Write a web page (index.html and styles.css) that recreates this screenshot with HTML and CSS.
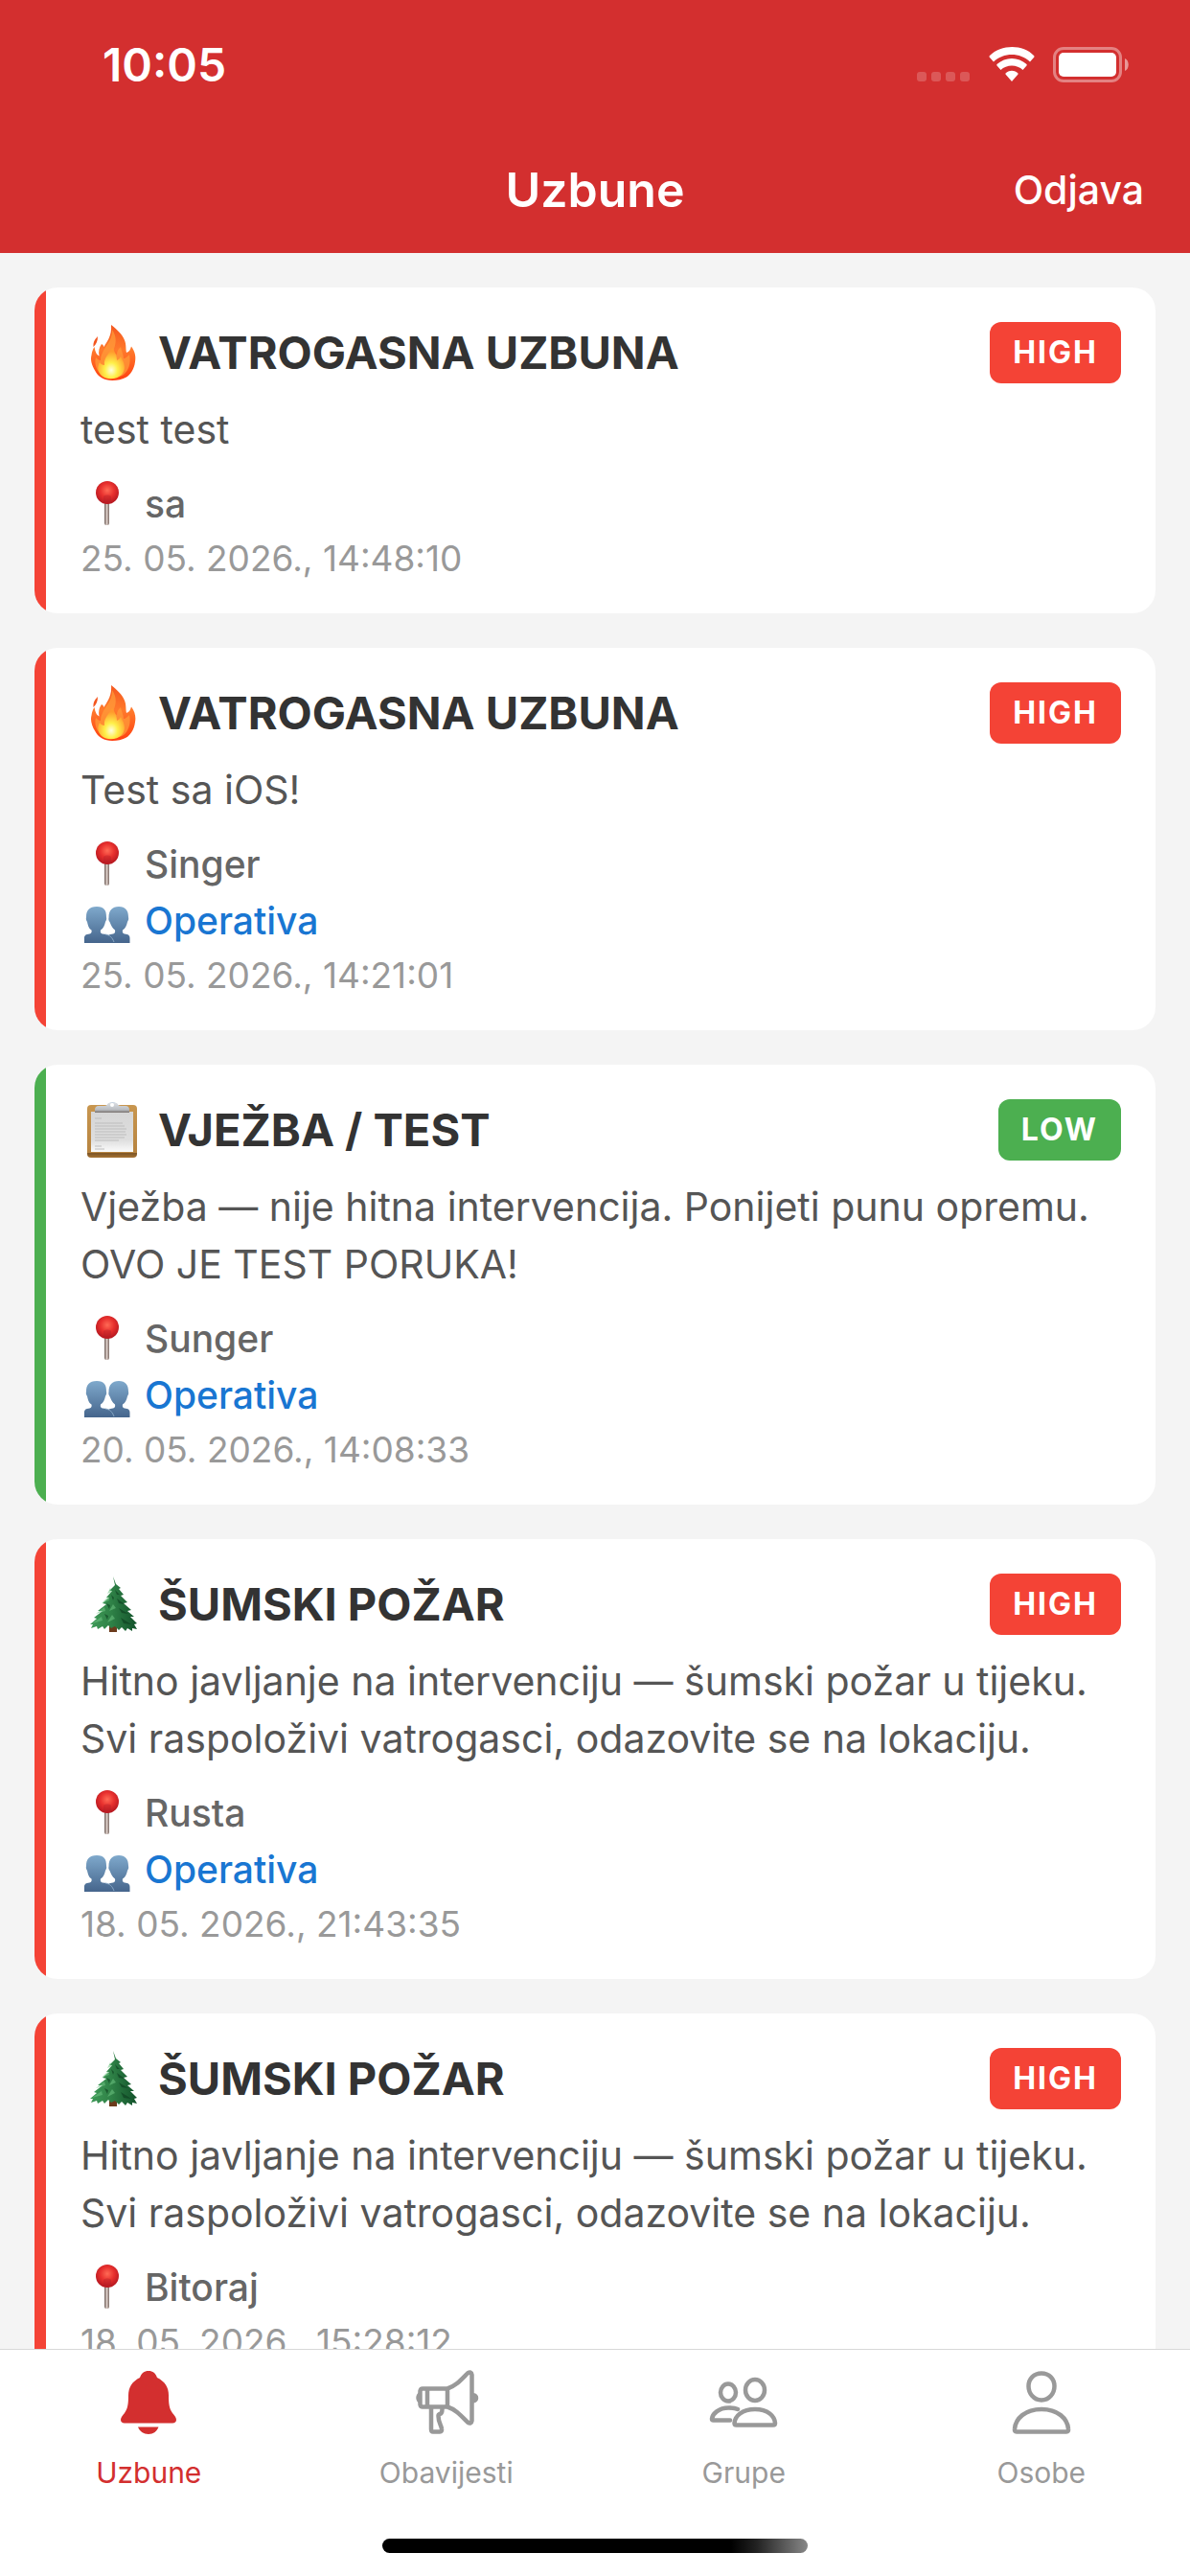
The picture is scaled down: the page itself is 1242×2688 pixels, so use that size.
FILE: index.html
```html
<!DOCTYPE html>
<html lang="hr">
<head>
<meta charset="utf-8">
<meta name="viewport" content="width=device-width, initial-scale=1">
<title>Uzbune</title>
<link rel="stylesheet" href="styles.css">
</head>
<body>
<svg class="sprite" aria-hidden="true">
  <defs>
    <linearGradient id="g-fire" x1="0" y1="0" x2="0" y2="1"><stop offset="0" stop-color="#f4571f"/><stop offset=".45" stop-color="#ff7a2c"/><stop offset="1" stop-color="#ff4010"/></linearGradient>
    <radialGradient id="g-core" cx=".5" cy=".72" r=".6"><stop offset="0" stop-color="#fffde0"/><stop offset=".4" stop-color="#fff04a"/><stop offset="1" stop-color="#ff9a2c"/></radialGradient>
    <radialGradient id="g-ball" cx=".5" cy=".4" r=".6"><stop offset="0" stop-color="#ff6a55"/><stop offset=".5" stop-color="#e8302e"/><stop offset="1" stop-color="#b3161f"/></radialGradient>
    <linearGradient id="g-stick"><stop offset="0" stop-color="#6d5d57"/><stop offset=".5" stop-color="#d9cbc5"/><stop offset="1" stop-color="#7b6a64"/></linearGradient>
    <linearGradient id="g-bust" x1="0" y1="0" x2="0" y2="1"><stop offset="0" stop-color="#7fa9cc"/><stop offset="1" stop-color="#45658c"/></linearGradient>
    <linearGradient id="g-board" x1="0" y1="0" x2="0" y2="1"><stop offset="0" stop-color="#c8964f"/><stop offset=".9" stop-color="#b78440"/><stop offset=".92" stop-color="#7c5424"/><stop offset="1" stop-color="#a87434"/></linearGradient>
    <linearGradient id="g-paper" x1="0" y1="0" x2="0" y2="1"><stop offset="0" stop-color="#d6d6d6"/><stop offset=".7" stop-color="#dedede"/><stop offset="1" stop-color="#fbfbfb"/></linearGradient>
    <linearGradient id="g-clip" x1="0" y1="0" x2="0" y2="1"><stop offset="0" stop-color="#d9dde2"/><stop offset=".7" stop-color="#b9bcc1"/><stop offset="1" stop-color="#77706c"/></linearGradient>
    <linearGradient id="g-tree"><stop offset="0" stop-color="#3f9a58"/><stop offset=".45" stop-color="#2f8247"/><stop offset="1" stop-color="#12512a"/></linearGradient>
  </defs>
  <symbol id="i-fire" viewBox="0 0 66 64">
    <path d="M18 15c-3 3-5 6-4.500 11 3-3 4.500-6 4.500-11z" fill="#f4561f"/>
    <path d="M32 3c5 4 12 10 14 16 2 5 1 8 2 13 3-1 4-3 5-6.500 4 5 5 11 4 16-1 8-5 14-10 16.500-4 2-8 3-14 3-8 0-15-4-18-10.500-3-5-5-11-3.500-16 .5-4 1.500-6 3-8.500 1 5 2 8 5 9.500-1-5 0-9 2.500-12.500 2 1 2 2 2.500 3C27 21 33 15 32 3z" fill="url(#g-fire)"/>
    <path d="M33 8c4 6 5 12 2 20-1 3 0 5 3 6 0-4 2-6 4-8 1 5 3 8 3 12 2 0 4-2 6-4 2 9-1 17-6 21-5 3.500-17 4-23 0-5-4-8-11-6-18 2 2 3 3 5 3 0-6 3-10 6-15 4-6 6-10 6-17z" fill="#ff9b3a" opacity=".75"/>
    <path d="M33 27c3 4 5 8 5 13 2-1 3-2 4-4 4 7 6 13 1 19-5 5-15 6-21 1-4-4-5-9-2-14 1 2 3 3 5 3-1-7 4-11 8-18z" fill="url(#g-core)"/>
  </symbol>
  <symbol id="i-clipboard" viewBox="0 0 66 64">
    <rect x="7" y="6" width="52" height="55" rx="4" fill="url(#g-board)"/>
    <rect x="11" y="13" width="44" height="42" fill="url(#g-paper)"/>
    <path d="M15 20h7M15 25h29M15 28h31M15 31h33M15 34h32M15 37h33M15 40h31M15 43h25M15 49h7M15 52h10" stroke="#bdbdbd" stroke-width="1"/>
    <path d="M27 8c1-1 1-5 6.500-5S39 7 40 8z" fill="#c6d3e0"/>
    <path d="M15 14v-3c0-2 1-4 4-4h6c2 0 3-1 4-3h9c1 2 2 3 4 3h5c3 0 4 2 4 4v3z" fill="url(#g-clip)"/>
    <circle cx="33" cy="6" r="2" fill="#fff"/>
  </symbol>
  <symbol id="i-tree" viewBox="0 0 66 64">
    <rect x="30" y="50" width="8" height="11" fill="#6b3b1c"/>
    <path d="M34 3l3 8 5 4-2 1 5 6-3 1 7 7-4 1 8 7-4 1 7 6-4 0 7 7-3 1 3 5-5-1 0 3-5-3-2 3-4-4-3 3-4-4-4 2-3-3-4 4-2-3-5 3-1-3-6 2 2-4-3 0 7-6-3-1 9-7-5 0 9-7-4-1 7-6-3 0 6-7-3 0 6-6z" fill="url(#g-tree)"/>
    <path d="M31 15l-3 6 5-2M29 24l-7 7 8-3M25 35l-9 7 10-3M22 45l-10 7 11-3M34 32l-4 7 7-3M33 43l-5 8 8-4" fill="#6fc583" opacity=".55"/>
    <path d="M36 17l2 5 3 0M38 26l2 5 6 1M40 36l3 5 7 1M42 46l3 6 8 1M27 31l4 2-1 4M25 42l4 2-1 4M32 22l3 3-1 3" fill="#0b3c1e" opacity=".6"/>
  </symbol>
  <symbol id="i-pin" viewBox="0 0 54 47">
    <rect x="25" y="22" width="5" height="24" rx="2" fill="url(#g-stick)"/>
    <circle cx="28" cy="12" r="12" fill="url(#g-ball)"/>
    <path d="M24 16c2-2 6-2 8 0v6h-8z" fill="#a81f27" opacity=".35"/>
  </symbol>
  <symbol id="i-busts" viewBox="0 0 54 47">
    <path d="M28 47V42c0-3 2-4 6-4.500 2-.5 2.500-2 2-4-3-2-4-5-5.500-8.500-1-1-1.500-3-1-4.500C29.500 13 33 9 40 9s10 4 10 11c.5 2 0 3.500-1 5-1 4-2 6.500-5 8.500-.5 2 0 3.500 2 4 4 .5 5.500 1.500 5.500 4.500v5z" fill="url(#g-bust)"/>
    <path d="M4 47v-5c0-3 1.500-4 5.500-4.500 2-.5 2.500-2 2-4C8.500 31.500 8 29 7 25c-1-1.500-1.500-3-1-5C6 13 9 9 17 9s10 4 10 11c.5 2 0 3.500-1 5-1 4-2 6.500-5 8.500-.5 2 0 3.500 2 4 7 .5 9 2.500 12 9.500z" fill="url(#g-bust)"/>
    <path d="M26 38c5 1 7 3 9 8" fill="none" stroke="#89a9c6" stroke-width="1"/>
  </symbol>
</svg>

<div class="app">
  <header class="header">
    <div class="status">
      <time class="status-time">10:05</time>
      <svg class="status-icons" viewBox="0 0 222 38" aria-hidden="true">
        <g fill="#fff" fill-opacity=".2"><rect x="0" y="26" width="10" height="10" rx="3"/><rect x="15" y="26" width="10" height="10" rx="3"/><rect x="30" y="26" width="10" height="10" rx="3"/><rect x="45" y="26" width="10" height="10" rx="3"/></g>
        <g fill="#fff"><path d="M80 15.500l-4-4.500q-1-1 0-2C88-3 111-3 122 9q1 1 0 2l-4 4.500C108 5.500 90 5.500 80 15.500z"/><path d="M87.500 24l-4-4.500q-.5-1 0-1.500c9-8 22-8 31 0q.5.500 0 1.500l-4 4.500c-6-6-17-6-23 0z"/><path d="M99 36l-6.500-7.500q-.5-1 .5-1.500c4-3 8-3 12 0q1 .5.500 1.500z"/></g>
        <rect x="143.500" y="1.500" width="69" height="34" rx="9.500" fill="none" stroke="#fff" stroke-opacity=".4" stroke-width="3"/>
        <rect x="148" y="6" width="60" height="25" rx="5" fill="#fff"/>
        <path d="M217 12c5 2 5 11 0 13z" fill="#fff" fill-opacity=".5"/>
      </svg>
    </div>
    <div class="nav">
      <h1 class="nav-title">Uzbune</h1>
      <button class="nav-action" type="button">Odjava</button>
    </div>
  </header>

  <main class="list">
    <article class="card">
      <div class="card-head">
        <svg class="emoji" aria-hidden="true"><use href="#i-fire"/></svg>
        <h2 class="card-title">VATROGASNA UZBUNA</h2>
        <span class="badge">HIGH</span>
      </div>
      <p class="message">test test</p>
      <div class="meta">
        <p class="meta-row"><svg class="emoji-small" aria-hidden="true"><use href="#i-pin"/></svg>sa</p>
        <time class="date">25. 05. 2026., 14:48:10</time>
      </div>
    </article>

    <article class="card">
      <div class="card-head">
        <svg class="emoji" aria-hidden="true"><use href="#i-fire"/></svg>
        <h2 class="card-title">VATROGASNA UZBUNA</h2>
        <span class="badge">HIGH</span>
      </div>
      <p class="message">Test sa iOS!</p>
      <div class="meta">
        <p class="meta-row"><svg class="emoji-small" aria-hidden="true"><use href="#i-pin"/></svg>Singer</p>
        <p class="meta-row meta-group"><svg class="emoji-small" aria-hidden="true"><use href="#i-busts"/></svg>Operativa</p>
        <time class="date">25. 05. 2026., 14:21:01</time>
      </div>
    </article>

    <article class="card card-low">
      <div class="card-head">
        <svg class="emoji" aria-hidden="true"><use href="#i-clipboard"/></svg>
        <h2 class="card-title">VJEŽBA / TEST</h2>
        <span class="badge">LOW</span>
      </div>
      <p class="message">Vježba — nije hitna intervencija. Ponijeti punu opremu.<br>OVO JE TEST PORUKA!</p>
      <div class="meta">
        <p class="meta-row"><svg class="emoji-small" aria-hidden="true"><use href="#i-pin"/></svg>Sunger</p>
        <p class="meta-row meta-group"><svg class="emoji-small" aria-hidden="true"><use href="#i-busts"/></svg>Operativa</p>
        <time class="date">20. 05. 2026., 14:08:33</time>
      </div>
    </article>

    <article class="card">
      <div class="card-head">
        <svg class="emoji" aria-hidden="true"><use href="#i-tree"/></svg>
        <h2 class="card-title">ŠUMSKI POŽAR</h2>
        <span class="badge">HIGH</span>
      </div>
      <p class="message">Hitno javljanje na intervenciju — šumski požar u tijeku.<br>Svi raspoloživi vatrogasci, odazovite se na lokaciju.</p>
      <div class="meta">
        <p class="meta-row"><svg class="emoji-small" aria-hidden="true"><use href="#i-pin"/></svg>Rusta</p>
        <p class="meta-row meta-group"><svg class="emoji-small" aria-hidden="true"><use href="#i-busts"/></svg>Operativa</p>
        <time class="date">18. 05. 2026., 21:43:35</time>
      </div>
    </article>

    <article class="card">
      <div class="card-head">
        <svg class="emoji" aria-hidden="true"><use href="#i-tree"/></svg>
        <h2 class="card-title">ŠUMSKI POŽAR</h2>
        <span class="badge">HIGH</span>
      </div>
      <p class="message">Hitno javljanje na intervenciju — šumski požar u tijeku.<br>Svi raspoloživi vatrogasci, odazovite se na lokaciju.</p>
      <div class="meta">
        <p class="meta-row"><svg class="emoji-small" aria-hidden="true"><use href="#i-pin"/></svg>Bitoraj</p>
        <time class="date">18. 05. 2026., 15:28:12</time>
      </div>
    </article>
  </main>

  <footer class="footer">
    <nav class="tabs">
      <a class="tab tab-active" href="#uzbune" aria-current="page">
        <svg class="tab-icon" viewBox="0 0 84 84" aria-hidden="true" fill="currentColor"><path d="M42 9c-4.500 0-7.500 2.500-9 7-8 4-12 10-12 18.500C21 43 20.500 48 17 53c-2 2.500-4 4.500-4 7 0 2 1.500 3.500 4 3.500h50c2.500 0 4-1.500 4-3.500 0-2.500-2-4.500-4-7-3.500-5-4-10-4-18.500C63 26 59 20 51 16c-1.500-4.500-4.500-7-9-7zM31 67.500h21.500C51 72 47 75 42 75s-9.500-3-11-7.500z"/></svg>
        <span>Uzbune</span>
      </a>
      <a class="tab" href="#obavijesti">
        <svg class="tab-icon" viewBox="0 0 84 84" aria-hidden="true" fill="none" stroke="currentColor" stroke-width="4.500" stroke-linejoin="round" stroke-linecap="round"><path d="M43 27.500H17q-2 0-2.500 2.500v14q.5 2.500 2.500 2.500h26M22 28v18M43 27.500v19M43 27.500C52 24.500 57 18.500 64 11.500q4-2.500 4.500 1.500v48q-.5 4-4.500 1.500C57 55.500 52 49.500 43 46.500M26 48v22q0 2.500 2 2.500h7q2.500 0 2-3c-.5-4-3.500-6.500-3.500-13.500q0-1.500 1.500-2 2.500-.5 2.500-5"/><path d="M14 31c-5 2-5 10 0 12zM70 32c7 0 7 10.500 0 10.500z" fill="currentColor" stroke="none"/></svg>
        <span>Obavijesti</span>
      </a>
      <a class="tab" href="#grupe">
        <svg class="tab-icon" viewBox="0 0 84 84" aria-hidden="true" fill="none" stroke="currentColor" stroke-width="4.500" stroke-linejoin="round" stroke-linecap="round"><ellipse cx="54" cy="29" rx="10" ry="11"/><path d="M34.500 65.500q-2 0-2-2C33 56 40.500 49 54 49s20.500 7 21 14.500q0 2-2 2z"/><ellipse cx="26" cy="31.500" rx="8" ry="9"/><path d="M36 49c-2-1-5-1.500-9.500-1.500C16 47.500 9.500 54 9 59q0 1.500 1.500 1.500H28"/></svg>
        <span>Grupe</span>
      </a>
      <a class="tab" href="#osobe">
        <svg class="tab-icon" viewBox="0 0 84 84" aria-hidden="true" fill="none" stroke="currentColor" stroke-width="4.500" stroke-linejoin="round" stroke-linecap="round"><path d="M42 11.500c8 0 13.500 6 13.500 13.500S50 39.500 42 39.500 28.500 32.500 28.500 25 34 11.500 42 11.500z"/><path d="M16 72.500q-2.500 0-2-3C15 58.500 25 49 42 49s27 9.500 28 20.500q.5 3-2 3z"/></svg>
        <span>Osobe</span>
      </a>
    </nav>
    <div class="home-indicator"></div>
  </footer>
</div>
</body>
</html>
```
FILE: styles.css
```css
* { box-sizing: border-box; margin: 0; padding: 0; }

body {
  background: #f4f4f4;
  color: #333;
  font-family: Inter, "Liberation Sans", sans-serif;
}

/* Kept rendered at zero size so the symbols can use its gradients */
.sprite { display: block; width: 0; height: 0; }

.app {
  display: flex;
  flex-direction: column;
  height: 100vh;
}

/* Header */
.header {
  flex: none;
  background: #d32f2f;
  color: #fff;
}

.status {
  display: flex;
  align-items: center;
  justify-content: space-between;
  height: 136px;
  padding: 0 63px 0 107px;
}

.status-time {
  font-size: 48px;
  font-weight: 600;
  line-height: 60px;
}

.status-icons { width: 222px; height: 38px; }

.nav {
  display: grid;
  grid-template-columns: 1fr auto 1fr;
  align-items: center;
  height: 128px;
  padding: 0 48px 4px;
}

.nav-title {
  grid-column: 2;
  font-size: 50px;
  font-weight: 600;
  line-height: 60px;
}

.nav-action {
  justify-self: end;
  border: 0;
  background: none;
  color: inherit;
  font: 500 41px/60px Inter, "Liberation Sans", sans-serif;
}

/* Alert list */
.list {
  flex: 1;
  display: flex;
  flex-direction: column;
  gap: 36px;
  min-height: 0;
  padding: 36px;
  overflow: hidden;
}

.card {
  --level: #f44336;
  flex: none;
  padding: 36px 36px 36px 48px;
  border-radius: 24px;
  background: linear-gradient(to right, var(--level) 12px, #fff 12px);
}

.card-low { --level: #4caf50; }

.card-head {
  display: flex;
  align-items: center;
  height: 64px;
}

.emoji {
  flex: none;
  width: 66px;
  height: 64px;
  margin-right: 15px;
}

.card-title {
  flex: 1;
  font-size: 47px;
  font-weight: 700;
  line-height: 60px;
}

.badge {
  padding: 12px 24px;
  border-radius: 12px;
  background: var(--level);
  color: #fff;
  font-size: 32px;
  font-weight: 700;
  line-height: 40px;
  letter-spacing: 2px;
}

.message {
  margin: 18px 0 24px;
  color: #555;
  font-size: 41px;
  line-height: 60px;
}

.meta {
  display: flex;
  flex-direction: column;
  gap: 12px;
}

.meta-row {
  display: flex;
  gap: 13px;
  color: #666;
  font-size: 39px;
  font-weight: 500;
  line-height: 47px;
}

.meta-group { color: #1976d2; }

.emoji-small { width: 54px; height: 47px; }

.date {
  color: #999;
  font-size: 37px;
  line-height: 43px;
}

/* Tab bar */
.footer {
  flex: none;
  padding-bottom: 24px;
  border-top: 1px solid #d8d8d8;
  background: #fff;
}

.tabs {
  display: grid;
  grid-template-columns: repeat(4, 1fr);
  padding: 13px 0 51px;
}

.tab {
  display: flex;
  flex-direction: column;
  align-items: center;
  gap: 13px;
  color: #999;
  font-size: 30px;
  line-height: 36px;
  text-decoration: none;
}

.tab-active { color: #d32f2f; }

.tab-icon { width: 84px; height: 84px; }

.home-indicator {
  width: 444px;
  height: 15px;
  margin: 0 auto;
  border-radius: 8px;
  background: linear-gradient(to right, #000 82%, #222 88%, #888);
}
```
